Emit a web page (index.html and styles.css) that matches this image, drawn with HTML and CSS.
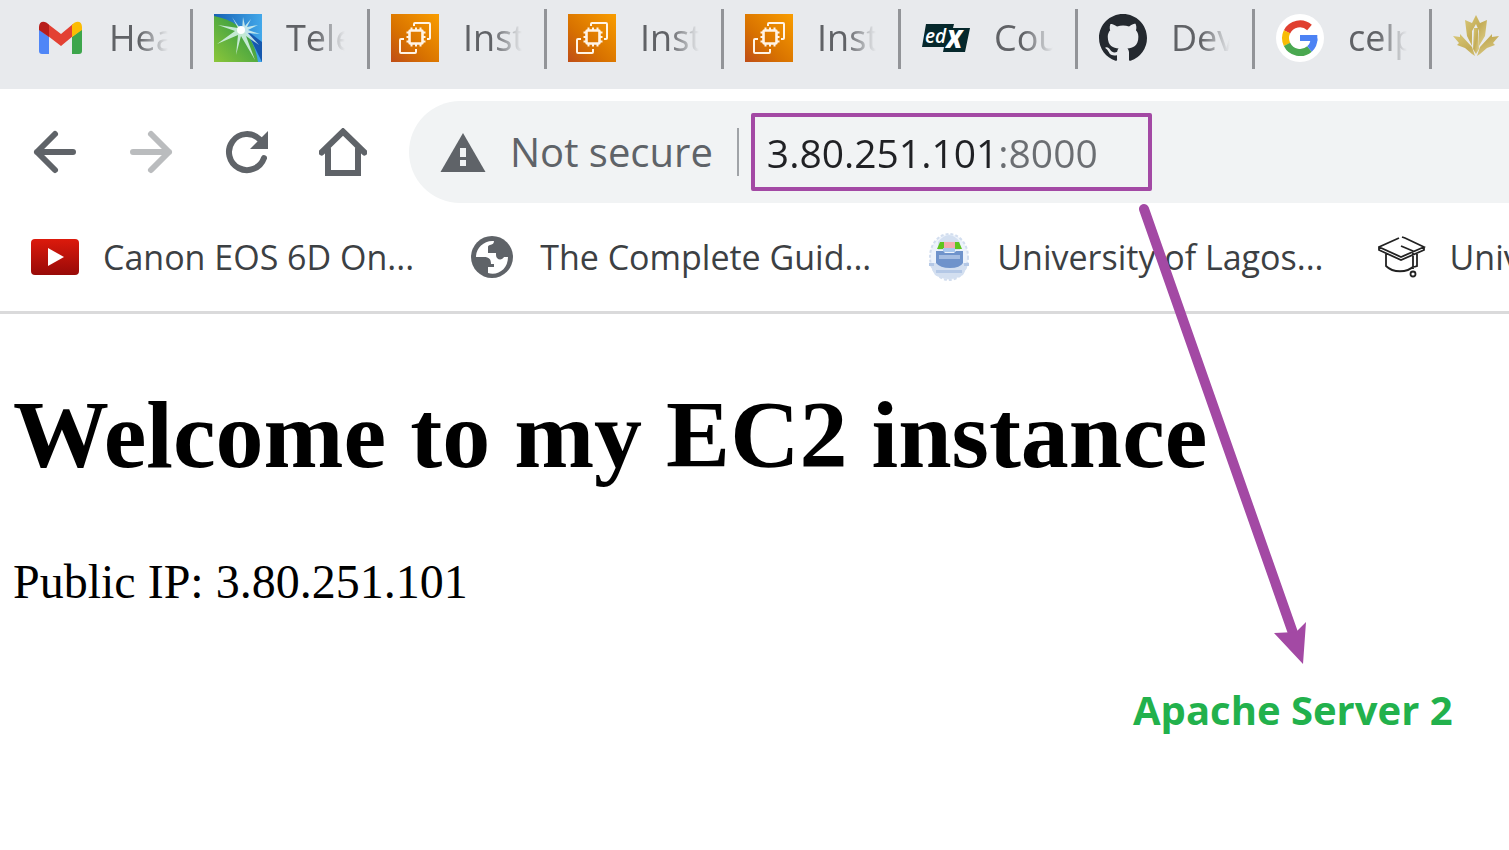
FILE: index.html
```html
<!DOCTYPE html>
<html lang="en">
<head>
<meta charset="utf-8">
<title>Welcome to my EC2 instance</title>
<meta name="viewport" content="width=device-width, initial-scale=1">
<link rel="stylesheet" href="styles.css">
</head>
<body>
<svg class="defs" width="0" height="0" aria-hidden="true">
  <defs>
    <linearGradient id="aws" x1="0" y1="1" x2="1" y2="0"><stop offset="0" stop-color="#bf4d17"/><stop offset=".4" stop-color="#d87200"/><stop offset="1" stop-color="#f99d00"/></linearGradient>
    <linearGradient id="grn" x1="0" y1="1" x2="1" y2="0"><stop offset="0" stop-color="#8cc63a"/><stop offset="1" stop-color="#1f9145"/></linearGradient>
    <linearGradient id="blu" x1="0" y1="0" x2="1" y2="0"><stop offset="0" stop-color="#1661b4"/><stop offset="1" stop-color="#42a8ea"/></linearGradient>
    <linearGradient id="red" x1="0" y1="0" x2="0" y2="1"><stop offset="0" stop-color="#dc1a0c"/><stop offset="1" stop-color="#980a08"/></linearGradient>
    <linearGradient id="gold" x1="0" y1="0" x2="1" y2="1"><stop offset="0" stop-color="#d9c878"/><stop offset=".5" stop-color="#c4ad58"/><stop offset="1" stop-color="#e0d292"/></linearGradient>
    <symbol id="ec2" viewBox="0 0 48 48">
      <path fill="url(#aws)" d="M0 0h48v48H0z"/>
      <g fill="none" stroke="#fff4e6" stroke-width="2">
        <path d="M23 12V10a1 1 0 0 1 1-1h14a1 1 0 0 1 1 1v14a1 1 0 0 1-1 1h-2M13 25H10a1 1 0 0 0-1 1v12a1 1 0 0 0 1 1h14a1 1 0 0 0 1-1v-3"/>
        <rect x="18.500" y="16.500" width="13" height="13" rx="1" stroke-width="2.600"/>
        <path d="M20.500 13.500v3M25 13.500v3M29.500 13.500v3M20.500 29.500v3M25 29.500v3M29.500 29.500v3M15.500 18.500h3M15.500 23h3M15.500 27.500h3M31.500 18.500h3M31.500 23h3M31.500 27.500h3"/>
      </g>
    </symbol>
  </defs>
</svg>

<header class="browser">
  <nav class="tabs" aria-label="Tabs">
    <a class="tab" href="#">
      <svg class="favicon" viewBox="0 0 48 48" aria-hidden="true">
        <path fill="#4f86f7" d="M2 15l10 8v17H5a3 3 0 0 1-3-3z"/>
        <path fill="#3da64c" d="M35 23l10-8v22a3 3 0 0 1-3 3h-7z"/>
        <path fill="#e34133" d="M11 10l13 10 12-10v12l-12 10-13-10z"/>
        <path fill="#b81d1a" d="M2 13c0-6 6-7 10-2v12L2 16z"/>
        <path fill="#fbbc04" d="M35 11c4-5 10-4 10 2v3l-10 7z"/>
      </svg>
      <span class="tab-title">Health</span>
    </a>
    <a class="tab" href="#">
      <svg class="favicon" viewBox="0 0 48 48" aria-hidden="true">
        <path fill="url(#blu)" d="M0 0h48v48H0z"/>
        <path fill="#1658ae" d="M32 16l16 12v20z"/>
        <path fill="url(#grn)" d="M0 2c25 5 40 20 44 46H0z"/>
        <g fill="#d9f4ee" opacity=".85"><path d="M28 17L18 3l6 11L4 11l17 6L3 30l21-9-2 20 5-19 14 24-9-24 13 9-11-12 12 1-12-4 10-5-11 2 4-8-6 7-2-9z"/></g>
        <circle cx="27" cy="16" r="4" fill="#fff"/>
      </svg>
      <span class="tab-title">Telecom</span>
    </a>
    <a class="tab" href="#"><svg class="favicon" aria-hidden="true"><use href="#ec2"/></svg><span class="tab-title">Instances</span></a>
    <a class="tab" href="#"><svg class="favicon" aria-hidden="true"><use href="#ec2"/></svg><span class="tab-title">Instances</span></a>
    <a class="tab" href="#"><svg class="favicon" aria-hidden="true"><use href="#ec2"/></svg><span class="tab-title">Instances</span></a>
    <a class="tab" href="#">
      <svg class="favicon" viewBox="0 0 48 48" role="img" aria-label="edX">
        <path fill="#06282c" d="M4 10h28l-1 4h17l-5 24H21l1-5H0z"/>
        <text class="edx" x="3" y="29">ed<tspan class="edx-x" dy="5">X</tspan></text>
      </svg>
      <span class="tab-title">Course</span>
    </a>
    <a class="tab" href="#">
      <svg class="favicon" viewBox="0 0 16 16" aria-hidden="true"><path fill="#24292f" d="M8 0C3.580 0 0 3.580 0 8c0 3.540 2.290 6.530 5.470 7.590.4.070.55-.17.55-.38 0-.19-.01-.82-.01-1.490-2.010.37-2.530-.49-2.690-.94-.09-.23-.48-.94-.82-1.130-.28-.15-.68-.52-.01-.53.63-.01 1.080.58 1.230.82.72 1.210 1.870.87 2.330.66.07-.52.28-.87.51-1.070-1.780-.2-3.640-.89-3.640-3.950 0-.87.31-1.590.82-2.150-.08-.2-.36-1.020.08-2.120 0 0 .67-.21 2.200.82.64-.18 1.320-.27 2-.27s1.360.09 2 .27c1.530-1.040 2.200-.82 2.200-.82.44 1.100.16 1.920.08 2.120.51.56.82 1.270.82 2.150 0 3.070-1.870 3.750-3.650 3.950.29.25.54.73.54 1.480 0 1.070-.01 1.930-.01 2.200 0 .21.15.46.55.38A8.010 8.010 0 0 0 16 8c0-4.420-3.580-8-8-8z"/></svg>
      <span class="tab-title">Developer</span>
    </a>
    <a class="tab" href="#">
      <svg class="favicon" viewBox="0 0 48 48" aria-hidden="true">
        <circle cx="24" cy="24" r="24" fill="#fff"/>
        <g fill="none" stroke-width="7">
          <path stroke="#e04030" d="M33.500 13.500A14.500 14.500 0 0 0 11 17.800"/>
          <path stroke="#f8bc05" d="M11 17.800a14.500 14.500 0 0 0 0 12.600"/>
          <path stroke="#4aa850" d="M11 30.400a14.500 14.500 0 0 0 22.500 4.600"/>
          <path stroke="#4c82f4" d="M33.500 35c3-2.600 4.500-6 4.500-10.500"/>
        </g>
        <path fill="#4c82f4" d="M24 21h17.300v6H24z"/>
      </svg>
      <span class="tab-title">celpip</span>
    </a>
    <a class="tab" href="#">
      <svg class="favicon" viewBox="0 0 48 48" aria-hidden="true">
        <g fill="url(#gold)">
          <path d="M23 1l4 8 7-3-2 16-6 10V17l-3-7-4 7v15l-5-10-2-16 7 3z"/>
          <path d="M0 22l7 1v-3l12 13 3 9-3-2-7-6-8-3 2-2zM46 22l-7 1v-3L27 33l-3 9 3-2 7-6 8-3-2-2z"/>
          <path d="M21 14h4l1 21-3 5-3-5z"/>
        </g>
      </svg>
      <span class="tab-title">CELPIP</span>
    </a>
  </nav>

  <div class="toolbar">
    <button class="tool" type="button" aria-label="Back"><svg viewBox="0 0 48 48" class="stroke-icon" aria-hidden="true"><path d="M24 6L6 24l18 18M6 24h36"/></svg></button>
    <button class="tool tool-off" type="button" aria-label="Forward"><svg viewBox="0 0 48 48" class="stroke-icon" aria-hidden="true"><path d="M24 6l18 18-18 18M42 24H6"/></svg></button>
    <button class="tool" type="button" aria-label="Reload"><svg viewBox="0 0 48 48" class="stroke-icon" aria-hidden="true"><path d="M36.700 11.300A18 18 0 1 0 41 30"/><path class="solid" d="M45 3v18H27z"/></svg></button>
    <button class="tool" type="button" aria-label="Home"><svg viewBox="0 0 48 48" class="stroke-icon" aria-hidden="true"><path class="miter" d="M2.500 24.500L24 3.500l21.500 21M9 21v24h30V21"/></svg></button>
    <div class="omnibox">
      <svg class="warning" viewBox="0 0 46 40" aria-hidden="true"><path fill="#5f6368" d="M23 1l22.500 39H.500z"/><path fill="#f1f3f4" d="M20 16h6v9h-6zM20 28h6v6h-6z"/></svg>
      <label class="security" for="url">Not secure</label>
      <input class="url" id="url" type="text" value="3.80.251.101:8000" spellcheck="false">
    </div>
  </div>

  <nav class="bookmarks" aria-label="Bookmarks">
    <a class="bookmark" href="#">
      <svg class="favicon" viewBox="0 0 48 48" aria-hidden="true"><rect y="6" width="48" height="36" rx="4" fill="url(#red)"/><path fill="#fff" d="M17 15l16 9-16 9z"/></svg>
      <span>Canon EOS 6D On...</span>
    </a>
    <a class="bookmark" href="#">
      <svg class="favicon" viewBox="0 0 48 48" aria-hidden="true"><circle cx="24" cy="24" r="21" fill="#5f6368"/><path fill="#fff" d="M26 8c-10-1-18 7-18 16h8c5 0 7 2 7 7h3v3h-6v6c10 3 20-4 20-16h-4c-2 4-8 3-8-2v-2h-8v-6c0-3 6-1 6-6z"/></svg>
      <span>The Complete Guid...</span>
    </a>
    <a class="bookmark" href="#">
      <svg class="favicon" viewBox="0 0 48 48" aria-hidden="true">
        <ellipse cx="24" cy="24" rx="19" ry="23" fill="#edf3fb" stroke="#d3deef" stroke-width="2" stroke-dasharray="3 2"/>
        <path fill="#d3dff0" d="M13 9q11-14 22 0v8H13zM4 30h40l-6 12q-14 8-28 0z"/>
        <path fill="#5ec41e" d="M15 9h5v7h-8zM29 9h5l3 7h-8z"/><path fill="#f4abb0" d="M19 9h11v7H19z"/>
        <path fill="#a9c8ee" d="M18 15h12v4H18z"/>
        <path fill="#6f93cb" d="M11 18h7l2 2h9l2-2h7v12q-3 5-13 5t-14-5z"/><path fill="#a5bde2" d="M14 22h21v4H14z"/><path fill="#b4c8e6" d="M4 30h5v3H4zM39 30h5v3h-5zM11 37h26v3H11z"/>
      </svg>
      <span>University of Lagos...</span>
    </a>
    <a class="bookmark" href="#">
      <svg class="favicon" viewBox="0 0 48 48" fill="none" stroke="#222" stroke-width="1.800" aria-hidden="true"><path d="M21 5L1 14l22 10 23-10L27 5l-3-1M1 14v3l22 10 23-10v-3M8 21v12c7 7 21 7 28 0M39 20v13l-3 1M23 13l12 5v18"/><circle cx="35" cy="41" r="2.500"/></svg>
      <span>University</span>
    </a>
  </nav>
</header>

<main class="page">
  <h1>Welcome to my EC2 instance</h1>
  <p>Public IP: 3.80.251.101</p>
</main>

<svg class="arrow" viewBox="0 0 170 465" aria-hidden="true"><path d="M9 9L158 433" fill="none" stroke="#a349a4" stroke-width="10" stroke-linecap="round"/><path fill="#a349a4" d="M168 464l-29-31 22-1 10-10z"/></svg>
<strong class="note">Apache Server 2</strong>
</body>
</html>
```
FILE: styles.css
```css
* { box-sizing: border-box; }

body {
  margin: 0;
  position: relative;
  min-height: 100vh;
  overflow: hidden;
  background: #fff;
  color: #000;
  font-family: "Open Sans", "Noto Sans", sans-serif;
}

.defs { position: absolute; }

a { color: inherit; text-decoration: none; }

.favicon { display: block; flex: none; width: 48px; height: 48px; }

.tabs {
  display: flex;
  align-items: flex-start;
  height: 89px;
  padding: 9px 0 0 16px;
  overflow: hidden;
  background: #e8eaed;
}

.tab {
  display: flex;
  flex: none;
  align-items: flex-start;
  gap: 24px;
  height: 60px;
  padding: 5px 22px 0 21px;
  border-right: 3px solid #929498;
  color: #606266;
  font-size: 36px;
  line-height: 48px;
}

.tab-title {
  width: 59px;
  overflow: hidden;
  white-space: nowrap;
  mask-image: linear-gradient(90deg, #000 50%, transparent);
}

.edx {
  fill: #fff;
  font-family: "Open Sans", sans-serif;
  font-size: 19px;
  font-style: italic;
  font-weight: 600;
}

.edx-x { font-size: 24px; font-weight: 800; }

.toolbar {
  display: flex;
  align-items: center;
  gap: 48px;
  padding: 12px 0 12px 31px;
}

.tool {
  flex: none;
  width: 48px;
  height: 48px;
  padding: 0;
  border: 0;
  background: none;
  color: #5f6368;
}

.tool-off { color: #babcbe; }

.tool svg { display: block; width: 48px; height: 48px; }

.stroke-icon {
  fill: none;
  stroke: currentColor;
  stroke-width: 6;
  stroke-linecap: round;
  stroke-linejoin: round;
}

.solid { fill: currentColor; stroke: none; }

.miter { stroke-linejoin: miter; }

.omnibox {
  display: flex;
  flex: 1;
  align-items: center;
  min-width: 0;
  height: 102px;
  margin-left: -6px;
  padding-left: 31px;
  border-radius: 51px 0 0 51px;
  background: #f1f3f4;
  font-size: 40px;
}

.warning { flex: none; width: 46px; height: 40px; }

.security {
  margin-left: 24px;
  padding-right: 24px;
  border-right: 2px solid #a0a3a7;
  color: #5f6368;
  line-height: 48px;
  white-space: nowrap;
}

.url {
  width: 401px;
  height: 78px;
  margin-left: 12px;
  padding: 0 12px;
  border: 4px solid #a349a4;
  border-radius: 2px;
  background: linear-gradient(90deg, #202124 247px, #6b6e72 247px) border-box text;
  color: transparent;
  font-family: inherit;
  font-size: 39px;
}

.bookmarks {
  display: flex;
  gap: 54px;
  height: 99px;
  padding: 18px 0 0 31px;
  overflow: hidden;
  border-bottom: 3px solid #dadadb;
  color: #3c4043;
  font-size: 34px;
  line-height: 48px;
}

.bookmark {
  display: flex;
  flex: none;
  gap: 24px;
  white-space: nowrap;
}

.page {
  padding: 65px 13px 0;
  font-family: "Liberation Serif", "Times New Roman", serif;
  font-size: 48px;
}

.page h1 { margin: 0 0 64px; font-size: 96px; }
.page p { margin: 0; }

.arrow {
  position: absolute;
  left: 1135px;
  top: 200px;
  width: 170px;
  height: 465px;
  overflow: visible;
}

.note {
  position: absolute;
  left: 1133px;
  top: 682px;
  color: #22b14c;
  font-size: 40px;
  line-height: 56px;
  white-space: nowrap;
}
```
